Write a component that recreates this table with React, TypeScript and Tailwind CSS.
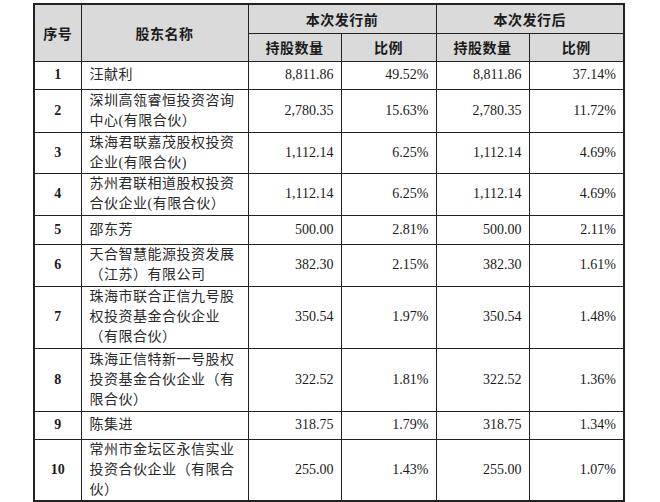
const rows = [
  { no: '1', name: ['汪献利'], h: 'h-[28px]', a: '8,811.86', ap: '49.52%', b: '8,811.86', bp: '37.14%' },
  { no: '2', name: ['深圳高瓴睿恒投资咨询', '中心(有限合伙）'], h: 'h-[43px]', a: '2,780.35', ap: '15.63%', b: '2,780.35', bp: '11.72%' },
  { no: '3', name: ['珠海君联嘉茂股权投资', '企业(有限合伙)'], h: 'h-[41px]', a: '1,112.14', ap: '6.25%', b: '1,112.14', bp: '4.69%' },
  { no: '4', name: ['苏州君联相道股权投资', '合伙企业(有限合伙）'], h: 'h-[42px]', a: '1,112.14', ap: '6.25%', b: '1,112.14', bp: '4.69%' },
  { no: '5', name: ['邵东芳'], h: 'h-[29px]', a: '500.00', ap: '2.81%', b: '500.00', bp: '2.11%' },
  { no: '6', name: ['天合智慧能源投资发展', '（江苏）有限公司'], h: 'h-[42px]', a: '382.30', ap: '2.15%', b: '382.30', bp: '1.61%' },
  { no: '7', name: ['珠海市联合正信九号股', '权投资基金合伙企业', '（有限合伙）'], h: 'h-[62px]', a: '350.54', ap: '1.97%', b: '350.54', bp: '1.48%' },
  { no: '8', name: ['珠海正信特新一号股权', '投资基金合伙企业（有', '限合伙）'], h: 'h-[63px]', a: '322.52', ap: '1.81%', b: '322.52', bp: '1.36%' },
  { no: '9', name: ['陈集进'], h: 'h-[28px]', a: '318.75', ap: '1.79%', b: '318.75', bp: '1.34%' },
  { no: '10', name: ['常州市金坛区永信实业', '投资合伙企业（有限合', '伙）'], h: 'h-[62px]', a: '255.00', ap: '1.43%', b: '255.00', bp: '1.07%' },
];

const cell = 'border border-[#222]';
const head = `${cell} bg-[#dadada] text-center font-bold text-[14px] tracking-[0.5px]`;
const num = `${cell} text-right pr-[7px] align-middle`;

export default function App() {
  return (
    <div
      className="w-[660px] h-[502px] bg-white pt-[3px] pl-[33px] overflow-hidden text-[#1a1a1a]"
      style={{ fontFamily: '"Liberation Serif", "Noto Sans CJK SC", serif' }}
    >
      <table className="table-fixed border-collapse border-2 border-[#222] w-[590px] text-[14px] leading-[20px]">
        <colgroup>
          <col className="w-[47px]" />
          <col className="w-[167px]" />
          <col className="w-[93px]" />
          <col className="w-[95px]" />
          <col className="w-[93px]" />
          <col className="w-[95px]" />
        </colgroup>
        <thead style={{ fontFamily: '"Noto Sans CJK SC", sans-serif' }}>
          <tr className="h-[29px]">
            <th rowSpan={2} className={head}>序号</th>
            <th rowSpan={2} className={head}>股东名称</th>
            <th colSpan={2} className={head}>本次发行前</th>
            <th colSpan={2} className={head}>本次发行后</th>
          </tr>
          <tr className="h-[28px]">
            <th className={head}>持股数量</th>
            <th className={head}>比例</th>
            <th className={head}>持股数量</th>
            <th className={head}>比例</th>
          </tr>
        </thead>
        <tbody>
          {rows.map((r) => (
            <tr key={r.no} className={r.h}>
              <td className={`${cell} text-center align-middle font-bold`}>{r.no}</td>
              <td className={`${cell} pl-[8px] pr-0 align-middle tracking-[0.5px] text-[#2a2a2a]`}>
                {r.name.map((line, i) => (
                  <div key={i} className="whitespace-nowrap">{line}</div>
                ))}
              </td>
              <td className={num}>{r.a}</td>
              <td className={num}>{r.ap}</td>
              <td className={num}>{r.b}</td>
              <td className={num}>{r.bp}</td>
            </tr>
          ))}
        </tbody>
      </table>
    </div>
  );
}
